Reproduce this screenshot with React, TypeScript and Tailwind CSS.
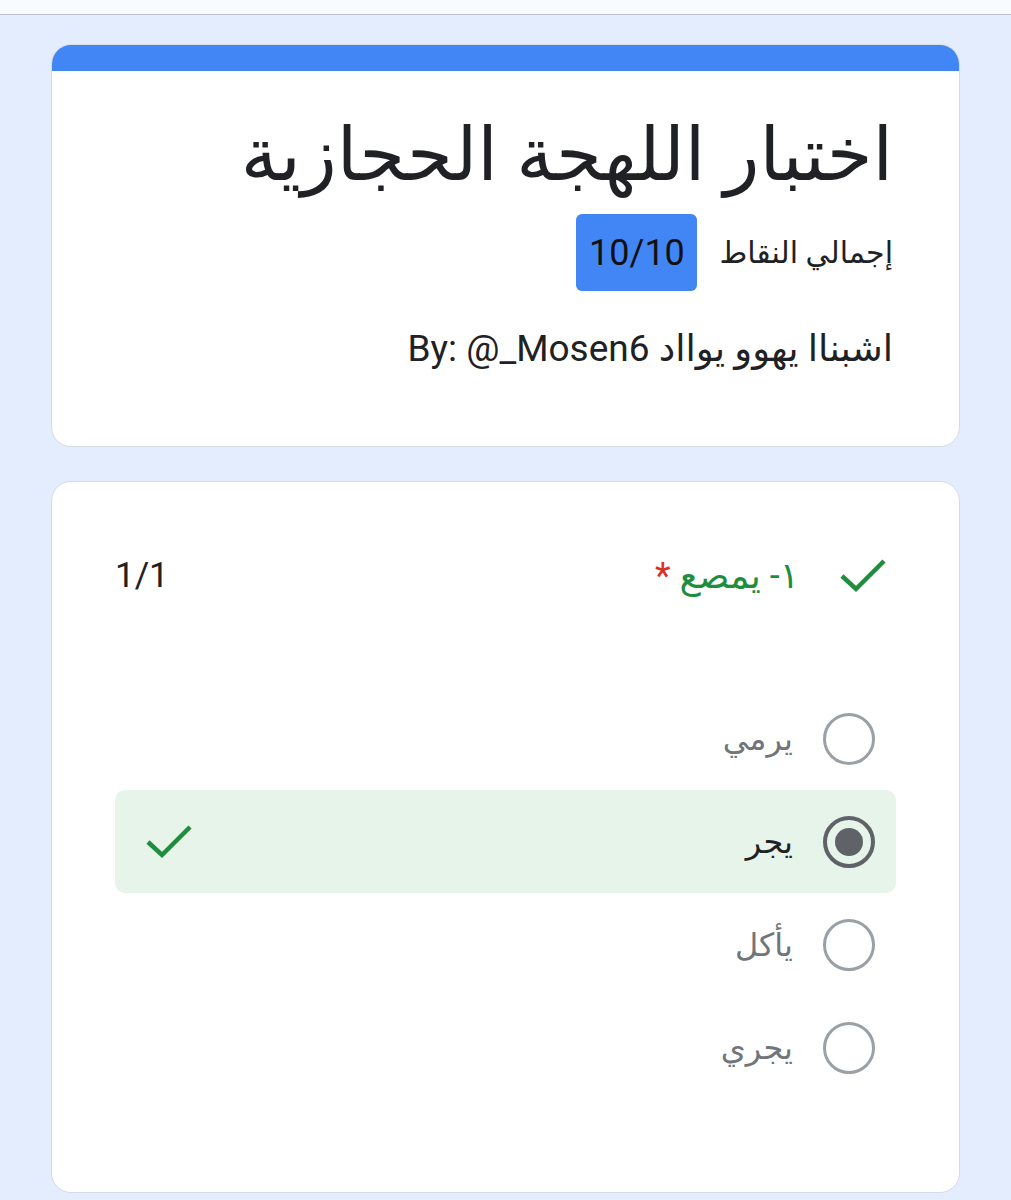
type Option = {
  label: string;
  selected?: boolean;
};

const options: Option[] = [
  { label: "يرمي" },
  { label: "يجر", selected: true },
  { label: "يأكل" },
  { label: "يجري" }
];

function CheckMark() {
  return (
    <svg viewBox="0 0 48 40" className="h-[40px] w-[48px] shrink-0" aria-hidden>
      <polyline
        points="3,20 17,33 45,5"
        fill="none"
        stroke="#1e8e3e"
        strokeWidth="4.5"
        strokeLinejoin="miter"
      />
    </svg>
  );
}

function Radio({ selected }: { selected?: boolean }) {
  if (selected) {
    return (
      <span className="flex h-[52px] w-[52px] shrink-0 items-center justify-center rounded-full border-[4px] border-[#5f6368]">
        <span className="h-[28px] w-[28px] rounded-full bg-[#5f6368]" />
      </span>
    );
  }
  return <span className="h-[52px] w-[52px] shrink-0 rounded-full border-[3px] border-[#9aa0a6]" />;
}

export default function App() {
  return (
    <div
      dir="rtl"
      className="min-h-[1200px] bg-[#e3edfd] text-[#202124]"
      style={{ fontFamily: '"Roboto", "DejaVu Sans", "Noto Sans", sans-serif' }}
    >
      <div className="h-[15px] border-b border-[#b9bfcb] bg-[#f8fbff]" />

      <div className="px-[51px] pt-[29px]">
        <div className="overflow-hidden rounded-[20px] border border-[#d7dbe2] bg-white">
          <div className="h-[26px] bg-[#4285f4]" />
          <div className="h-[375px] pr-[66px] pl-8 pt-[36px]">
            <h1 className="text-[74px] leading-[96px] font-normal">اختبار اللهجة الحجازية</h1>
            <div className="mt-[11px] flex items-center gap-[22px]">
              <span className="text-[30px]">إجمالي النقاط</span>
              <span className="flex h-[77px] w-[121px] items-center justify-center rounded-[6px] bg-[#4285f4] text-[36px] text-[#111]">
                10/10
              </span>
            </div>
            <p className="mt-[34px] text-[37px] leading-[48px]">اشبناا يهوو يوااد By: @_Mosen6</p>
          </div>
        </div>

        <div className="mt-[34px] h-[712px] rounded-[20px] border border-[#d7dbe2] bg-white">
          <div className="flex items-center justify-between pr-[72px] pl-[63px] pt-[70px]">
            <div className="flex items-center gap-[40px]">
              <CheckMark />
              <span className="text-[36px] leading-[48px] text-[#1e8e3e]">
                ١- يمصع <span className="text-[#d93025]">*</span>
              </span>
            </div>
            <span dir="ltr" className="text-[35px] leading-[48px] text-[#202124]">1/1</span>
          </div>

          <div className="mx-[63px] mt-[87px] flex flex-col">
            {options.map((option) => (
              <div
                key={option.label}
                className={
                  option.selected
                    ? "flex h-[103px] items-center justify-between rounded-[10px] bg-[#e6f4ea] pr-[21px] pl-[30px]"
                    : "flex h-[103px] items-center justify-between pr-[21px] pl-[30px]"
                }
              >
                <div className="flex items-center gap-[30px]">
                  <Radio selected={option.selected} />
                  <span className={option.selected ? "text-[32px] text-[#202124]" : "text-[32px] text-[#70757a]"}>
                    {option.label}
                  </span>
                </div>
                {option.selected ? <CheckMark /> : null}
              </div>
            ))}
          </div>
        </div>
      </div>
    </div>
  );
}
